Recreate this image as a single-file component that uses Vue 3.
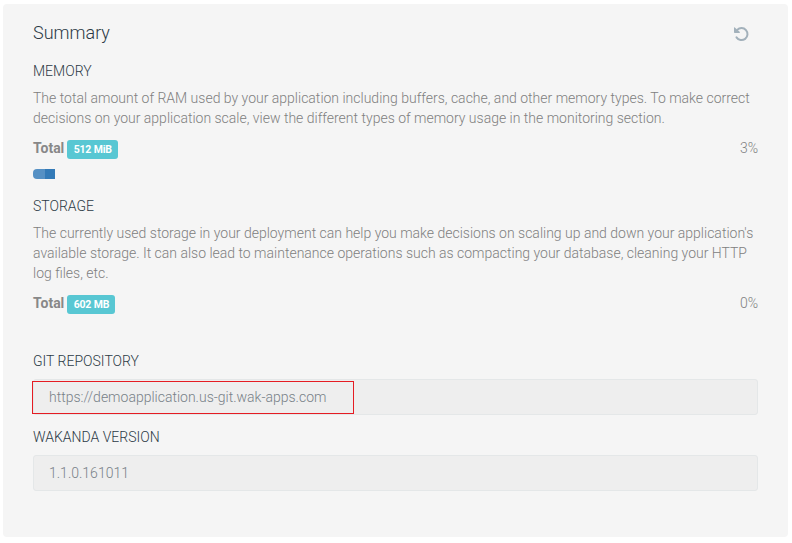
<script setup>
const sections = [
  {
    title: 'MEMORY',
    text: 'The total amount of RAM used by your application including buffers, cache, and other memory types. To make correct decisions on your application scale, view the different types of memory usage in the monitoring section.',
    total: '512 MiB',
    percent: 3
  },
  {
    title: 'STORAGE',
    text: "The currently used storage in your deployment can help you make decisions on scaling up and down your application's available storage. It can also lead to maintenance operations such as compacting your database, cleaning your HTTP log files, etc.",
    total: '602 MB',
    percent: 0
  }
]
const fields = [
  { label: 'GIT REPOSITORY', value: 'https://demoapplication.us-git.wak-apps.com', marked: true },
  { label: 'WAKANDA VERSION', value: '1.1.0.161011', marked: false }
]
</script>

<template>
  <main class="card">
    <header class="head">
      <h1>Summary</h1>
      <button class="refresh" aria-label="Refresh">
        <svg viewBox="0 0 15 15">
          <path class="arc" d="M3.200 2.900A6 6 0 1 1 2.500 10.400" />
          <path class="tip" d="M0 .4Q.3 0 .8.400L5.900 5.100Q6 6 5.300 6H.7Q0 6 0 5.300Z" />
        </svg>
      </button>
    </header>

    <section v-for="s in sections" :key="s.title" class="usage">
      <h2>{{ s.title }}</h2>
      <p>{{ s.text }}</p>
      <div class="row">
        <div class="total"><strong>Total</strong><span class="badge">{{ s.total }}</span></div>
        <span>{{ s.percent }}%</span>
      </div>
      <div class="progress">
        <div class="bar" :style="{ width: s.percent + '%' }"></div>
      </div>
    </section>

    <div v-for="f in fields" :key="f.label" class="field">
      <h2>{{ f.label }}</h2>
      <div class="input">
        {{ f.value }}
        <div v-if="f.marked" class="mark"></div>
      </div>
    </div>
  </main>
</template>

<style>
body {
  background: #fff;
}
</style>

<style scoped>
.card {
  box-sizing: border-box;
  width: 785px;
  height: 533px;
  margin: 4px 0 0 3px;
  padding: 17px 30px 0;
  background: #f5f5f5;
  border-radius: 4px;
  font-family: Roboto, sans-serif;
  font-size: 14px;
  font-weight: 300;
  line-height: 20px;
  color: #788188;
  display: flow-root;
}
.head {
  display: flex;
  justify-content: space-between;
  height: 40px;
}
h1 {
  margin: 0;
  font-size: 18px;
  font-weight: 300;
  line-height: 24px;
  color: #2c3a45;
}
.refresh {
  width: 15px;
  height: 15px;
  margin: 6px 9.500px 0 0;
  padding: 0;
  border: 0;
  background: none;
}
.refresh svg {
  display: block;
  width: 15px;
  height: 15px;
}
.arc {
  fill: none;
  stroke: #a3b1bb;
  stroke-width: 2;
  stroke-linecap: round;
}
.tip {
  fill: #a3b1bb;
}
h2 {
  margin: 0;
  font-size: 14px;
  font-weight: 300;
  line-height: 20px;
  color: #2c3a45;
}
p {
  margin: 7px 0 10px;
  color: #808080;
}
.row {
  display: flex;
  justify-content: space-between;
  height: 20px;
  color: #808080;
}
.total {
  display: flex;
  gap: 3px;
}
strong {
  font-weight: 700;
  color: #888;
}
.badge {
  height: 19px;
  margin-top: 2px;
  padding: 0 6px 0 6.300px;
  box-sizing: border-box;
  border-radius: 3px;
  background: #58c7d3;
  color: #fff;
  font-size: 10.500px;
  font-weight: 700;
  letter-spacing: -0.170px;
  line-height: 19px;
}
.progress {
  height: 10px;
  margin: 11px 0 17px;
  border-radius: 4px;
  overflow: hidden;
}
.bar {
  height: 10px;
  background: linear-gradient(90deg, #5590c4 12px, #337ab7 12px);
}
.field {
  margin-bottom: 12px;
}
.input {
  position: relative;
  box-sizing: border-box;
  height: 36px;
  margin-top: 8px;
  padding: 7px 15px;
  border: 1px solid #e4e7e8;
  border-radius: 3px;
  background: #eee;
}
.mark {
  position: absolute;
  left: -2px;
  top: 1px;
  box-sizing: border-box;
  width: 322px;
  height: 33px;
  border: 1px solid #e51c23;
}
</style>
